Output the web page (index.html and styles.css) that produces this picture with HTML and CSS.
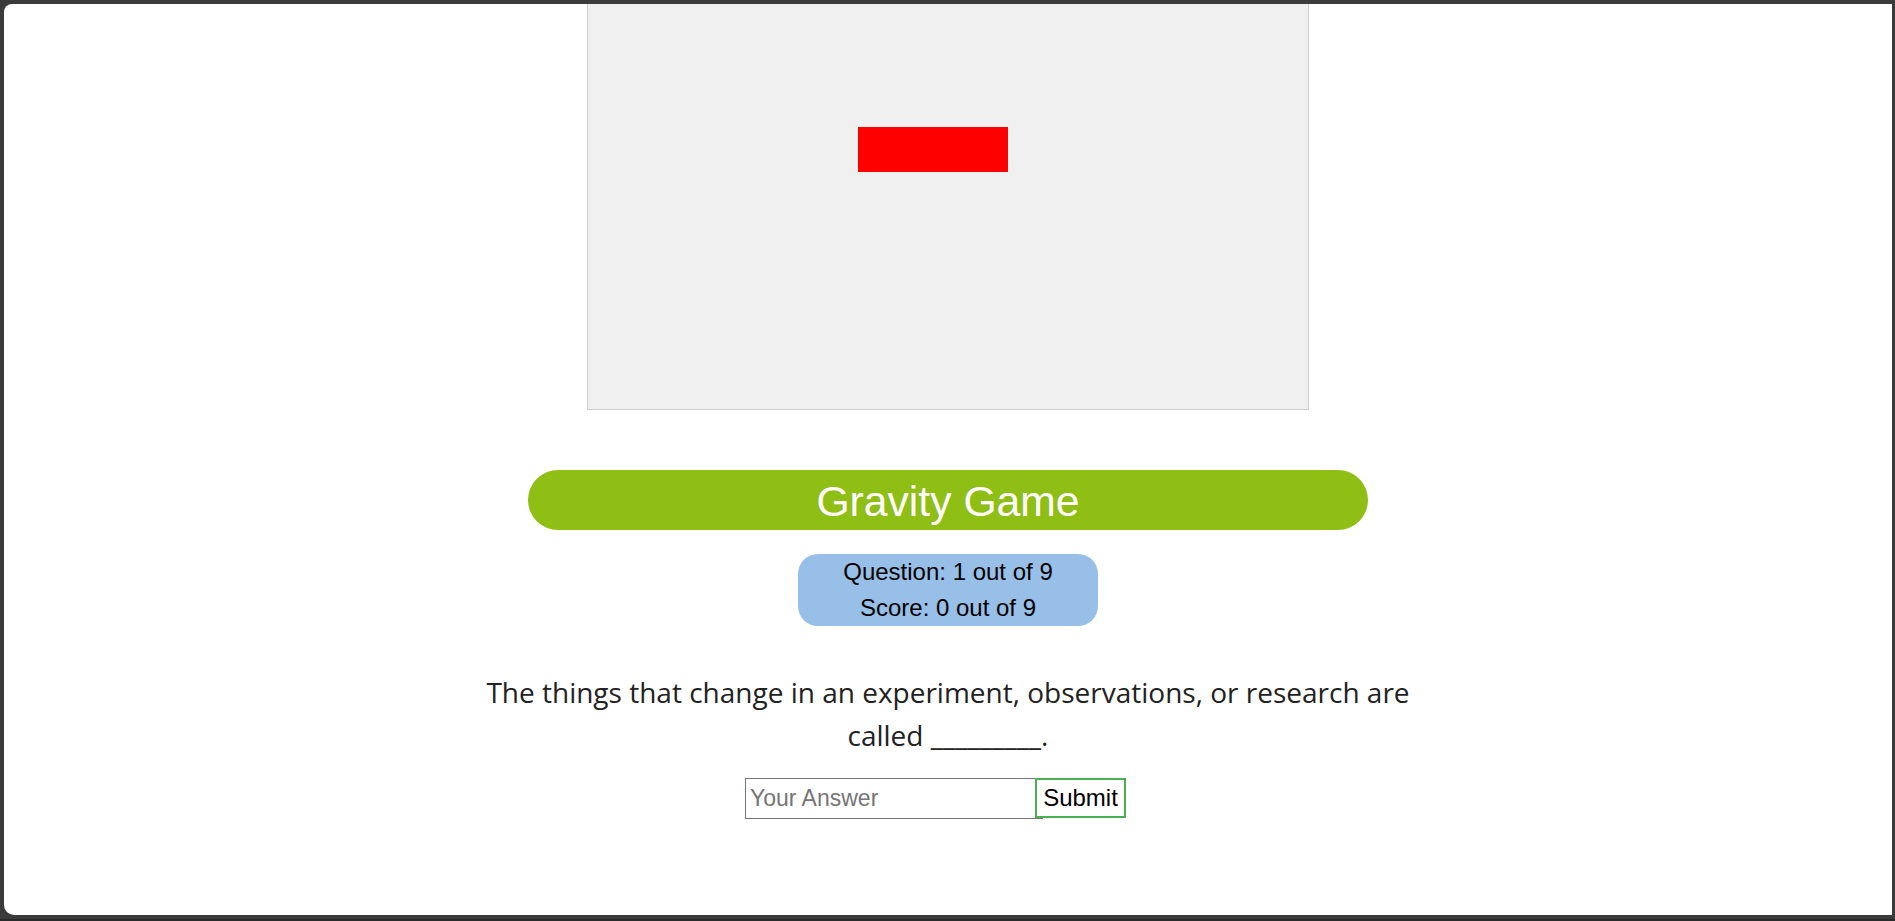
FILE: index.html
```html
<!DOCTYPE html>
<html lang="en">
<head>
<meta charset="utf-8">
<title>Gravity Game</title>
<link rel="stylesheet" href="styles.css">
</head>
<body>
<div class="window">
  <main class="game">
    <div class="canvas">
      <div class="block"></div>
    </div>
    <h1 class="title">Gravity Game</h1>
    <div class="stats">
      <div>Question: 1 out of 9</div>
      <div>Score: 0 out of 9</div>
    </div>
    <p class="question">The things that change in an experiment, observations, or research are called _________.</p>
    <form class="answer">
      <input class="answer-input" type="text" placeholder="Your Answer">
      <button class="submit" type="button">Submit</button>
    </form>
  </main>
</div>
</body>
</html>
```

FILE: styles.css
```css
html, body {
  margin: 0;
  padding: 0;
  height: 921px;
  overflow: hidden;
}
body {
  background: linear-gradient(to bottom, #3b3b3b 0, #3b3b3b 919px, #2a2a2a 919px);
}
.window {
  margin: 4px 3px 0 4px;
  width: 1888px;
  height: 911px;
  background: #ffffff;
  border-radius: 8px 0 0 10px;
  overflow: hidden;
}
.game {
  display: flex;
  flex-direction: column;
  align-items: center;
}
.canvas {
  position: relative;
  width: 720px;
  height: 480px;
  margin-top: -76px;
  background: #f0f0f0;
  border: 1px solid #cfcfcf;
  flex: none;
}
.block {
  position: absolute;
  left: 270px;
  top: 198px;
  width: 150px;
  height: 45px;
  background: #ff0000;
}
.title {
  margin: 60px 0 0;
  width: 840px;
  height: 60px;
  box-sizing: border-box;
  padding-top: 2px;
  border-radius: 30px;
  background: #8fbe14;
  color: #ffffff;
  font-family: "Liberation Sans", Arial, sans-serif;
  font-weight: normal;
  font-size: 42.67px;
  line-height: 58px;
  text-align: center;
}
.stats {
  margin-top: 24px;
  width: 300px;
  height: 72px;
  border-radius: 20px;
  background: #97bfe7;
  color: #000000;
  font-family: "Liberation Sans", Arial, sans-serif;
  font-size: 24px;
  line-height: 36px;
  text-align: center;
}
.question {
  margin: 45px 0 0;
  width: 960px;
  color: #222222;
  font-family: "Open Sans", "Noto Sans", sans-serif;
  font-size: 28px;
  line-height: 43px;
  text-align: center;
}
.answer {
  display: flex;
  align-items: center;
  margin-top: 21px;
  padding-right: 25px;
}
.answer-input {
  width: 298px;
  height: 41px;
  box-sizing: border-box;
  margin: 0;
  padding: 0 4px;
  border: 1px solid #767676;
  font-family: "Liberation Sans", Arial, sans-serif;
  font-size: 23px;
  color: #000;
  background: #fff;
}
.answer-input::placeholder {
  color: #757575;
}
.submit {
  margin: -2px 0 0 -8px;
  width: 91px;
  height: 40px;
  box-sizing: border-box;
  padding: 0;
  border: 2px solid #4caf50;
  background: #ffffff;
  color: #000000;
  font-family: "Liberation Sans", Arial, sans-serif;
  font-size: 24px;
  position: relative;
}
```
